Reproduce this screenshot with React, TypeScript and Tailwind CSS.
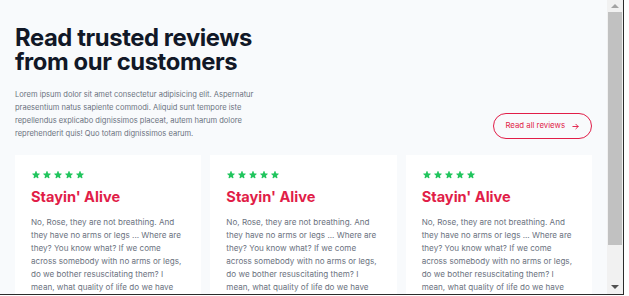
const reviews = [1, 2, 3];

const Star = () => (
  <svg viewBox="0 0 20 20" className="h-[10px] w-[10px] fill-current">
    <path d="M9.05 2.93c.3-.92 1.6-.92 1.9 0l1.07 3.29a1 1 0 00.95.69h3.46c.97 0 1.37 1.24.59 1.81l-2.8 2.03a1 1 0 00-.36 1.12l1.07 3.29c.3.92-.76 1.69-1.54 1.12l-2.8-2.03a1 1 0 00-1.18 0l-2.8 2.03c-.78.57-1.84-.2-1.54-1.12l1.07-3.29a1 1 0 00-.36-1.12l-2.8-2.03c-.78-.57-.38-1.81.59-1.81h3.46a1 1 0 00.95-.69l1.07-3.29z" />
  </svg>
);

const ReviewCard = () => (
  <blockquote className="flex-1 bg-white px-[16px] pt-[15px]">
    <div className="flex gap-[1px] text-[#22c55e]">
      <Star />
      <Star />
      <Star />
      <Star />
      <Star />
    </div>
    <p className="mt-[5px] text-[14.6px] font-bold leading-[24px] text-[#e11d48]">Stayin' Alive</p>
    <p className="mt-[7px] max-w-[153px] text-[8.1px] leading-[13px] text-[#6b7280]">
      No, Rose, they are not breathing. And they have no arms or legs ... Where are they? You know what? If
      we come across somebody with no arms or legs, do we bother resuscitating them? I mean, what quality
      of life do we have there?
    </p>
  </blockquote>
);

export default function App() {
  return (
    <div className="h-[296px] w-[629px] overflow-hidden bg-white" style={{ fontFamily: "Inter, 'Noto Sans', sans-serif" }}>
      <div className="flex h-[295px] w-[624px] border-b border-r border-[#2b2b2b]">
        <section className="w-[607px] overflow-hidden bg-[#f8fafc] px-[15px] pt-[26px]">
          <div className="flex items-end justify-between">
            <div className="max-w-[262px]">
              <h2 className="text-[23.8px] font-bold leading-[24px] tracking-[-0.4px] text-[#111827]">
                Read trusted reviews from our customers
              </h2>
              <p className="mt-[14px] text-[7.55px] leading-[13px] text-[#6b7280]">
                Lorem ipsum dolor sit amet consectetur adipisicing elit. Aspernatur praesentium natus sapiente
                commodi. Aliquid sunt tempore iste repellendus explicabo dignissimos placeat, autem harum
                dolore reprehenderit quis! Quo totam dignissimos earum.
              </p>
            </div>
            <a className="mb-[1px] flex h-[26px] items-center gap-[6px] rounded-full border border-[#e11d48] px-[11px] text-[7.8px] text-[#e11d48]">
              Read all reviews
              <svg viewBox="0 0 24 24" className="h-[9px] w-[9px]" fill="none" stroke="currentColor" strokeWidth="2.5" strokeLinecap="round" strokeLinejoin="round">
                <path d="M5 12h14M13 6l6 6-6 6" />
              </svg>
            </a>
          </div>
          <div className="mt-[15px] flex gap-[9px]">
            {reviews.map((r) => (
              <ReviewCard key={r} />
            ))}
          </div>
        </section>
        <div className="flex w-[16px] flex-col bg-[#f1f1f1]">
          <div className="flex h-[12px] items-center justify-center">
            <div className="h-0 w-0 border-x-[4px] border-b-[4px] border-x-transparent border-b-[#a3a3a3]" />
          </div>
          <div className="mx-[1px] h-[233px] bg-[#c1c1c1]" />
          <div className="flex-1" />
          <div className="flex h-[14px] items-center justify-center">
            <div className="h-0 w-0 border-x-[4px] border-t-[4px] border-x-transparent border-t-[#505050]" />
          </div>
        </div>
      </div>
    </div>
  );
}
